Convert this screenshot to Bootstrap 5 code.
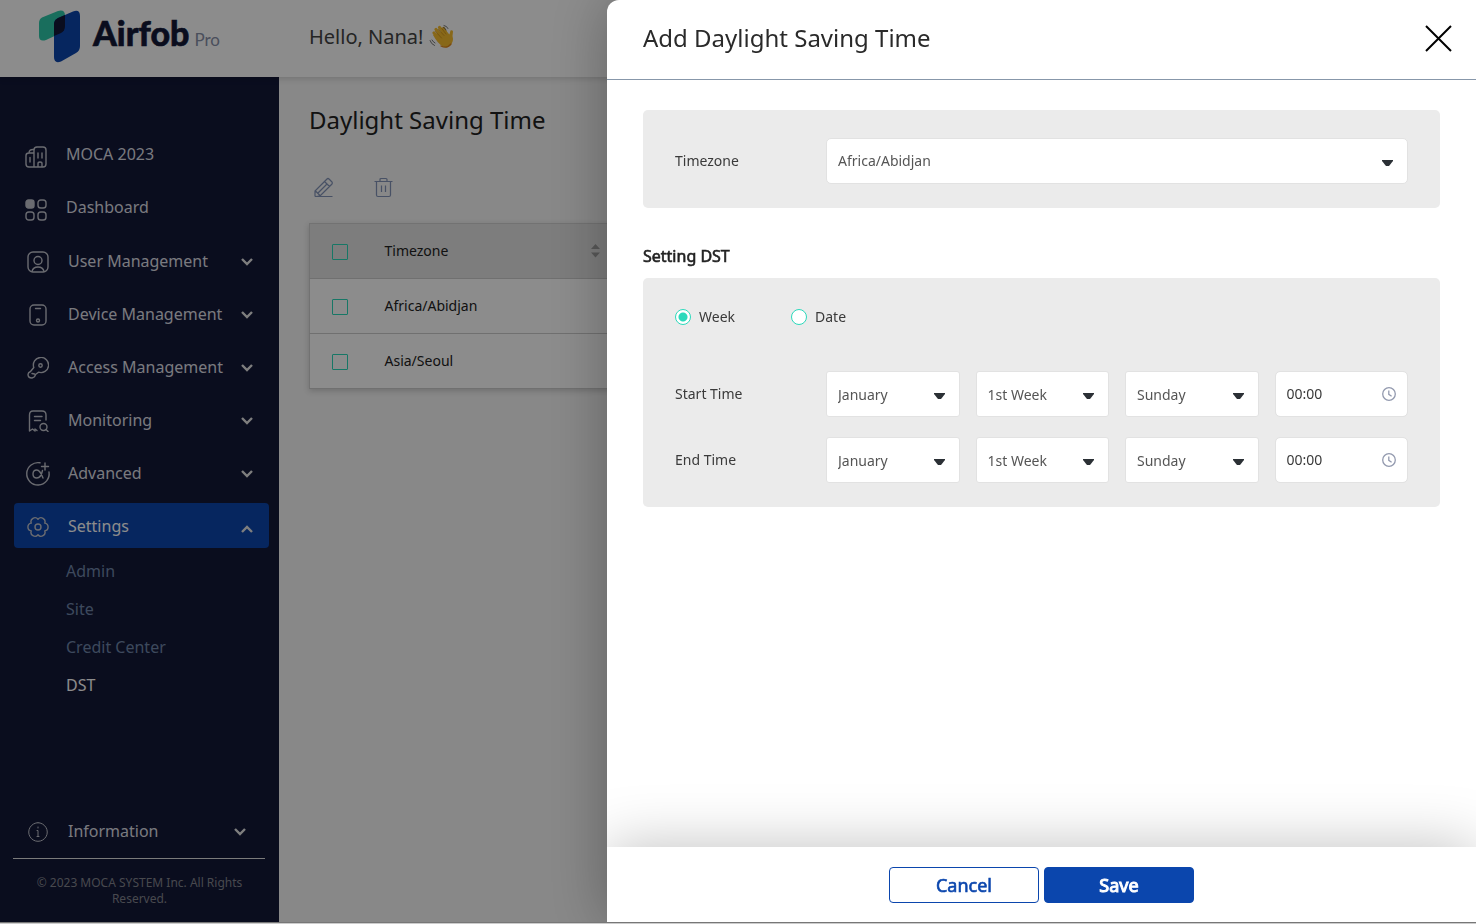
<!DOCTYPE html>
<html lang="en">
<head>
<meta charset="utf-8">
<meta name="viewport" content="width=device-width, initial-scale=1">
<title>Airfob Pro</title>
<link href="https://cdn.jsdelivr.net/npm/bootstrap@5.3.0/dist/css/bootstrap.min.css" rel="stylesheet">
<style>
:root { --navy: #131838; --brand: #0b46ad; --mint: #2bd9bb; --side: 279px; }
body { font-family: "Noto Sans", sans-serif; font-size: 14px; line-height: 20px; color: #222; background: #f7f7f7; overflow: hidden; }
a { text-decoration: none; }
svg { display: block; flex: none; }
.topbar { height: 77px; padding-bottom: 4px; background: #fff; box-shadow: 0 2px 6px rgba(0,0,0,.14); z-index: 1; }
.brand-area { width: var(--side); padding-left: 38px; }
.brand-text { margin: -7px 0 0 12px; gap: 5px; }
.brand-name { font: 900 34px/40px Lato, sans-serif; color: var(--navy); -webkit-text-stroke: .6px currentColor; }
.brand-sub { font: 400 17px/20px Lato, sans-serif; color: #8790a8; }
.hello { font-size: 20px; line-height: 28px; color: #444; padding-left: 30px; gap: 6px; }
.side { width: var(--side); background: var(--navy); padding: 55px 10px 17px 14px; flex: none; }
.side-link { height: 45px; padding: 0 15px 0 13px; gap: 19px; margin-bottom: 8px; font-size: 16px; color: #dedfe5; border-radius: 4px; white-space: nowrap; }
.side-link svg { margin-top: 3px; fill: none; stroke: #c2c4cd; stroke-width: 1.4; stroke-linecap: round; stroke-linejoin: round; }
.side-link .chev { margin-left: auto; stroke: #e6e6e6; stroke-width: 2.4; stroke-linecap: butt; stroke-linejoin: miter; }
.side-link .nav-name { width: 160px; flex: none; }
.side-link .nav-name + .chev { margin-left: -6px; }
.side-link.top-link { padding: 0 11px 2px; }
.side-link.top-link svg { margin-top: 6px; }
.side-link.current { background: var(--brand); color: #fff; margin-bottom: 4px; }
.side-link.current .chev { margin-top: 7px; }
.sub-link { height: 38px; padding-left: 52px; font-size: 16px; color: #6f86a9; }
.sub-link.current { color: #fff; }
.side-foot { margin-right: 4px; }
.side-foot .side-link { margin-bottom: 5px; padding-right: 19px; }
.side-foot hr { margin: 0 0 0 -1px; border-color: #e0e0e0; opacity: 1; }
.copyright { font-size: 12px; line-height: 16px; color: #84868f; padding: 16px 15px 0; }
.page-title { font-size: 24px; line-height: 32px; font-weight: 400; margin: 0; }
.content { padding: 27px 30px; min-width: 0; }
.tools { gap: 40px; margin: 41px 0 25px 5px; }
.tool-btn { padding: 0; border: 0; background: none; color: #8394b8; }
.grid-table { margin: 0; box-shadow: 0 2px 6px rgba(0,0,0,.18); border: 1px solid #d0d0d0; --bs-table-bg: #fff; }
.grid-table th, .grid-table td { height: 55px; padding: 0; vertical-align: middle; font-weight: 400; border-color: #ccc; color: #222; }
.grid-table thead th { background: #e3e3e3; }
.pick-col { width: 75px; }
.grid-table .form-check-input { width: 16px; height: 16px; margin: 2px 0 0 22px; border: 1px solid var(--mint); border-radius: 1px; display: block; background-color: transparent; }
.sort-name { width: 206px; }
.offcanvas-backdrop.show { opacity: .45; }
.offcanvas.offcanvas-end { width: calc(100% - 607px); bottom: 2px; border: 0; border-radius: 12px 0 0 0; box-shadow: 0 0 60px rgba(0,0,0,.3); color: #3a3a3a; overflow: hidden; }
.offcanvas-header { height: 80px; padding: 0 24px 3px 36px; border-bottom: 1px solid #8797aa; }
.offcanvas-title { font-size: 24px; line-height: 32px; font-weight: 400; color: #2a2a2a; }
.close-btn { padding: 0; border: 0; background: none; color: #000; }
.offcanvas-body { padding: 30px 36px; }
.panel-box { background: #ebebeb; border-radius: 5px; padding: 28px 32px 24px; }
.field-name { width: 151px; flex: none; }
.section-name { font-size: 16px; line-height: 24px; margin: 36px 0 10px; color: #222; font-weight: 400; }
.faux-semi { -webkit-text-stroke: .6px currentColor; }
.field { height: 46px; border: 1px solid #e2e2e2; font-size: 14px; line-height: 20px; color: #555; padding: 0 11px 1px; flex: 1; min-width: 0; width: 0; background-color: #fff; background-repeat: no-repeat; }
.form-select.field { background-image: url("data:image/svg+xml,%3Csvg xmlns='http://www.w3.org/2000/svg' viewBox='0 0 11 6'%3E%3Cpath d='M0 0h11v1L7 6H4L0 1z' fill='%232b3035'/%3E%3C/svg%3E"); background-size: 11px 6px; background-position: right 14px top 21px; border-radius: 5px; }
.form-select.field.short { border-radius: 3px; padding: 2px 11px 0; }
.form-control.field { border-radius: 5px; padding: 0 11px 1px; color: #3a3a3a; background-image: url("data:image/svg+xml,%3Csvg xmlns='http://www.w3.org/2000/svg' viewBox='0 0 14 14' fill='none' stroke='%239299ae' stroke-width='1.3'%3E%3Ccircle cx='7' cy='7' r='6.3'/%3E%3Cpath d='M6.8 3.4v4l2.8 1.8'/%3E%3C/svg%3E"); background-size: 14px 14px; background-position: right 11px top 15px; }
.mode { width: 116px; gap: 8px; }
.mode .form-check-input { width: 16px; height: 16px; margin: 0; border: 1px solid var(--mint); background-color: #fff; }
.mode .form-check-input:checked { background-image: radial-gradient(circle, var(--mint) 4px, transparent 5px); background-size: 16px 16px; }
.modes { height: 24px; margin-bottom: 42px; margin-top: -1px; }
.panel-foot { height: 75px; gap: 5px; background: #fff; box-shadow: 0 0 60px rgba(0,0,0,.25); z-index: 1; flex: none; }
.act { width: 150px; height: 36px; padding: 0; font-size: 18px; line-height: 24px; border-radius: 4px; border-color: var(--brand); color: var(--brand); background: #fff; }
.act.primary { background: var(--brand); color: #fff; -webkit-text-stroke-width: 1px; }
.base-strip { height: 2px; background: #ccc; border-top: 1px solid #777; z-index: 1050; }
</style>
</head>
<body>
<div class="d-flex flex-column vh-100">
  <header class="topbar d-flex align-items-center position-relative">
    <div class="brand-area d-flex align-items-center">
      <svg width="43" height="53" viewBox="0 0 43 53"><path d="M1 13Q1 9 4 7.500L20 1Q27-1 27 6V16Q27 21 23 23L8 30Q1 32 1 26Z" fill="#2ec8a9"/><path d="M16 14Q16 10 20 8L35 1.500Q42-1 42 6V36Q42 41 38 43L23 51.500Q16 54 16 47Z" fill="#0b46ad"/><path d="M16 26V14Q16 10 20 8L27 5V16Q27 21 23 23Z" fill="#131838"/></svg>
      <div class="brand-text d-flex align-items-baseline"><span class="brand-name">Airfob</span><span class="brand-sub">Pro</span></div>
    </div>
    <div class="hello d-flex align-items-center">Hello, Nana!
      <svg width="25" height="25" viewBox="0 0 25 25" fill="none" stroke-linecap="round"><path d="M5 9 11.500 16M7 5.500 14 13M10.500 3.500 16.500 11M14.500 4.500 18 11" stroke="#f8bd2e" stroke-width="3.200"/><path d="M4 11Q9 20 14 22.500Q18 24.500 21.500 21Q25 17.500 23.500 12L24 7.500Q23.500 5.500 21.500 6.500L20.500 10.500 17 7 9 9Z" fill="#f8bd2e"/><path d="M6.500 7.500 12.500 14M9.500 5.500 15 11.500M12.800 4.500 17 10" stroke="#c98b15" stroke-width=".7"/><path d="M12 22Q18 25 22 20" stroke="#e0891d" stroke-width="1.300"/><path d="M15 1.500Q18 2 19 4.500M14.500 3.500Q16.500 4 17 6M1 16.500Q2 20 5.500 21.500M3 16Q4 18 6 19" stroke="#555" stroke-width=".8"/></svg>
    </div>
  </header>
  <div class="d-flex flex-grow-1">
    <nav class="side d-flex flex-column" aria-label="Main">
      <a href="#" class="side-link top-link d-flex align-items-center"><svg width="22" height="22" viewBox="0 0 22 22"><path d="M9 21V4Q9 1 12 1H18Q21 1 21 4V18Q21 21 18 21H4Q1 21 1 18V9.500Q1 7 4 7H9M4 7Q4 3 9 3.500M5 11.500V16M13 7V12M17 7V12M13 21V17.500Q13 16 15 16T17 17.500V21"/></svg>MOCA 2023</a>
      <a href="#" class="side-link top-link d-flex align-items-center"><svg width="22" height="22" viewBox="0 0 22 22"><rect x="1" y="1" width="8" height="8" rx="2.500" fill="#c2c4cd"/><rect x="13" y="1" width="8" height="8" rx="2.800"/><rect x="1" y="13" width="8" height="8" rx="2.800"/><rect x="13" y="13" width="8" height="8" rx="2.800"/></svg>Dashboard</a>
      <a href="#" class="side-link d-flex align-items-center"><svg width="22" height="22" viewBox="0 0 22 22"><rect x="1" y="1" width="20" height="20" rx="5"/><circle cx="11" cy="9.500" r="4"/><path d="M5 20.500Q6 16 11 16T17 20.500"/></svg><span class="nav-name">User Management</span><svg class="chev" width="12" height="8" viewBox="0 0 12 8"><path d="M1 1 6 6 11 1"/></svg></a>
      <a href="#" class="side-link d-flex align-items-center"><svg width="22" height="22" viewBox="0 0 22 22"><rect x="3" y="1" width="16" height="20" rx="4"/><path d="M8.500 4.500H13.500"/><circle cx="11" cy="16.500" r="1.500"/></svg><span class="nav-name">Device Management</span><svg class="chev" width="12" height="8" viewBox="0 0 12 8"><path d="M1 1 6 6 11 1"/></svg></a>
      <a href="#" class="side-link d-flex align-items-center"><svg width="22" height="22" viewBox="0 0 22 22"><path d="M6.800 10.500A7.600 7.600 0 1 1 11.500 15.200L8.500 17.500Q8 20.500 5 21Q1 21 1 17.500Q1 15.500 3.500 14.500ZM5 16.500 7.500 17"/><circle cx="13.500" cy="8.500" r="1.700"/></svg><span class="nav-name">Access Management</span><svg class="chev" width="12" height="8" viewBox="0 0 12 8"><path d="M1 1 6 6 11 1"/></svg></a>
      <a href="#" class="side-link d-flex align-items-center"><svg width="22" height="22" viewBox="0 0 22 22"><path d="M19 10V5Q19 1 15 1H6Q2.500 1 2.500 5V21L5.500 19 8 21V19L10 20.500M7.500 6.500H15M7.500 10.500H13.500"/><circle cx="16.500" cy="17" r="3.500"/><path d="M19 19.500 21 21.500"/></svg><span class="nav-name">Monitoring</span><svg class="chev" width="12" height="8" viewBox="0 0 12 8"><path d="M1 1 6 6 11 1"/></svg></a>
      <a href="#" class="side-link d-flex align-items-center"><svg width="22" height="22" viewBox="0 0 22 22" overflow="visible"><path d="M13-.2A11.200 11.200 0 1 0 22 9M18 0V7M14.500 3.500H21.500"/><path d="M15.500 7.500Q14 15 9.800 15Q6 15 6 11T9.800 7Q13 7 16 15"/></svg><span class="nav-name">Advanced</span><svg class="chev" width="12" height="8" viewBox="0 0 12 8"><path d="M1 1 6 6 11 1"/></svg></a>
      <a href="#" class="side-link current d-flex align-items-center"><svg width="22" height="22" viewBox="0 0 22 22"><path d="M11 3.200A3.950 3.950 0 0 1 17.750 7.100A3.950 3.950 0 0 1 17.750 14.900A3.950 3.950 0 0 1 11 18.800A3.950 3.950 0 0 1 4.250 14.900A3.950 3.950 0 0 1 4.250 7.100A3.950 3.950 0 0 1 11 3.200Z"/><circle cx="11" cy="11" r="3"/></svg><span class="nav-name">Settings</span><svg class="chev" width="12" height="8" viewBox="0 0 12 8"><path d="M1 7 6 2 11 7"/></svg></a>
      <a href="#" class="sub-link d-flex align-items-center">Admin</a>
      <a href="#" class="sub-link d-flex align-items-center">Site</a>
      <a href="#" class="sub-link d-flex align-items-center">Credit Center</a>
      <a href="#" class="sub-link current d-flex align-items-center" aria-current="page">DST</a>
      <div class="side-foot mt-auto">
        <a href="#" class="side-link d-flex align-items-center"><svg width="22" height="22" viewBox="0 0 22 22"><path d="M11 1.700A9.300 9.300 0 1 1 10.990 1.700M11 6V7M10 9.500H11V15.500M10 15.500H12" stroke-width="1"/></svg>Information<svg class="chev" width="12" height="8" viewBox="0 0 12 8"><path d="M1 1 6 6 11 1"/></svg></a>
        <hr>
        <div class="copyright text-center">© 2023 MOCA SYSTEM Inc. All Rights Reserved.</div>
      </div>
    </nav>
    <main class="content flex-grow-1">
      <h1 class="page-title">Daylight Saving Time</h1>
      <div class="tools d-flex">
        <button type="button" class="tool-btn" aria-label="Edit"><svg width="20" height="21" viewBox="0 0 20 21" fill="none" stroke="currentColor" stroke-width="1.200"><path d="M1 19.500H18.500M1 19.500V14L13 2Q14 1 15 2L18 5Q18.800 6 18 7L6.500 18.500Q4 19.500 1 19.500M10.500 4.500 15.500 9.500M1.500 14 6 18.500M13 7 4 16"/></svg></button>
        <button type="button" class="tool-btn" aria-label="Delete"><svg width="20" height="21" viewBox="0 0 20 21" fill="none" stroke="currentColor" stroke-width="1.200"><path d="M.5 4.500H18.500M2.500 4.500V18Q2.500 19.500 4 19.500H15Q16.500 19.500 16.500 18V4.500M6 4.500V2.500Q6 1.500 7 1.500H12Q13 1.500 13 2.500V4.500M7.500 8.500V15M11.500 8.500V15"/></svg></button>
      </div>
      <table class="table grid-table">
        <thead><tr>
          <th class="pick-col"><input class="form-check-input" type="checkbox" aria-label="Select all"></th>
          <th><div class="d-flex align-items-center"><span class="sort-name">Timezone</span><svg width="9" height="14" viewBox="0 0 9 14" fill="#a0a0a0"><path d="M4.500 0 9 5H0ZM0 8.500H9L4.500 13.500Z"/></svg></div></th>
        </tr></thead>
        <tbody>
          <tr><td><input class="form-check-input" type="checkbox" aria-label="Select Africa/Abidjan"></td><td>Africa/Abidjan</td></tr>
          <tr><td><input class="form-check-input" type="checkbox" aria-label="Select Asia/Seoul"></td><td>Asia/Seoul</td></tr>
        </tbody>
      </table>
    </main>
  </div>
</div>
<div class="offcanvas-backdrop show"></div>
<form class="offcanvas offcanvas-end show" role="dialog" aria-labelledby="panelTitle" data-bs-backdrop="false" data-bs-scroll="true">
  <div class="offcanvas-header">
    <h2 class="offcanvas-title" id="panelTitle">Add Daylight Saving Time</h2>
    <button type="button" class="close-btn" aria-label="Close"><svg width="27" height="27" viewBox="0 0 27 27" stroke="currentColor" stroke-width="2"><path d="M1 1 26 26M26 1 1 26"/></svg></button>
  </div>
  <div class="offcanvas-body">
    <div class="panel-box d-flex align-items-center">
      <label class="field-name" for="tz">Timezone</label>
      <select class="form-select field" id="tz"><option>Africa/Abidjan</option></select>
    </div>
    <h3 class="section-name faux-semi">Setting DST</h3>
    <div class="panel-box">
      <div class="modes d-flex">
        <div class="mode d-flex align-items-center"><input class="form-check-input" type="radio" name="mode" id="week" checked><label for="week">Week</label></div>
        <div class="mode d-flex align-items-center"><input class="form-check-input" type="radio" name="mode" id="date"><label for="date">Date</label></div>
      </div>
      <div class="d-flex align-items-center mb-3 pb-1">
        <label class="field-name" for="startMonth">Start Time</label>
        <div class="d-flex gap-3 flex-grow-1">
          <select class="form-select field short" id="startMonth"><option>January</option></select>
          <select class="form-select field short" aria-label="Start week"><option>1st Week</option></select>
          <select class="form-select field short" aria-label="Start day"><option>Sunday</option></select>
          <input class="form-control field" type="text" value="00:00" aria-label="Start hour">
        </div>
      </div>
      <div class="d-flex align-items-center">
        <label class="field-name" for="endMonth">End Time</label>
        <div class="d-flex gap-3 flex-grow-1">
          <select class="form-select field short" id="endMonth"><option>January</option></select>
          <select class="form-select field short" aria-label="End week"><option>1st Week</option></select>
          <select class="form-select field short" aria-label="End day"><option>Sunday</option></select>
          <input class="form-control field" type="text" value="00:00" aria-label="End hour">
        </div>
      </div>
    </div>
  </div>
  <div class="panel-foot d-flex align-items-center justify-content-center">
    <button type="button" class="btn act faux-semi">Cancel</button>
    <button type="submit" class="btn act primary faux-semi">Save</button>
  </div>
</form>
<div class="base-strip position-fixed bottom-0 start-0 end-0"></div>
<script src="https://cdn.jsdelivr.net/npm/bootstrap@5.3.0/dist/js/bootstrap.bundle.min.js"></script>
</body>
</html>
